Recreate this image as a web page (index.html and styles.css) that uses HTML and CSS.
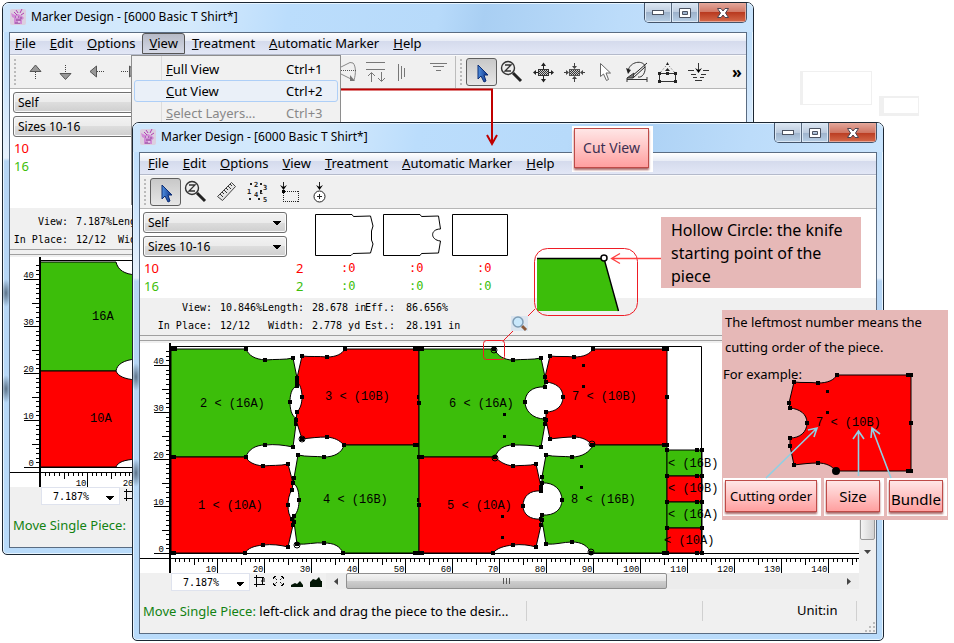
FILE: index.html
```html
<!DOCTYPE html>
<html lang="en">
<head>
<meta charset="utf-8">
<title>Marker Design</title>
<link rel="stylesheet" href="styles.css">
</head>
<body>
<svg class="defs" aria-hidden="true">
  <defs>
    <marker id="dot" markerUnits="userSpaceOnUse" markerWidth="5" markerHeight="5" refX="2" refY="2"><rect width="4" height="4"/></marker>
    <pattern id="hatch" width="2" height="2" patternUnits="userSpaceOnUse"><rect width="2" height="2" fill="#ccc"/><rect width="1" height="1" fill="#333"/><rect x="1" y="1" width="1" height="1" fill="#333"/></pattern>
    <linearGradient id="blue" x1="0" x2="1"><stop offset="0" stop-color="#4f8fe0"/><stop offset="1" stop-color="#0a2f86"/></linearGradient>
    <symbol id="i-cursor" viewBox="0 0 31 28"><path d="M12 7V21L15 18L18 24L20 23L18 17H22Z" fill="url(#blue)" stroke="#0b2c74"/></symbol>
    <symbol id="i-zoom" viewBox="0 0 31 28"><circle cx="11" cy="10" r="6.5" fill="#eee" stroke="#333" stroke-width="1.4"/><path d="M8 7H14L8 13H14" fill="none" stroke="#333" stroke-width="1.3"/><path d="M16 15L24 23" stroke="#222" stroke-width="3"/></symbol>
    <symbol id="i-app" viewBox="0 0 16 16"><rect width="16" height="16" rx="2" fill="#dccfe0"/><path d="M1 4L5 6L8 5L12 7L14 9L12 11V15H4V9L2 8Z" fill="#d18ad6"/><path d="M6 1L8 4M12 0L10 4M14 4L11 6M4 3L7 6" stroke="#b13fb2"/><path d="M5 8H9M6 11H11M5 14H10M10 9H12" stroke="#8c4d96"/><path d="M7 7V9M9 12V14" stroke="#fff"/></symbol>
  </defs>
</svg>

<main class="desktop">

<section class="window window-back">
  <header class="titlebar">
    <svg class="app-icon"><use href="#i-app"/></svg>
    <h1>Marker Design - [6000 Basic T Shirt*]</h1>
    <div class="window-buttons">
      <button aria-label="Minimize"><svg viewBox="0 0 12 6"><rect x=".5" y=".5" width="11" height="4" fill="#fff" stroke="#4c5361"/></svg></button>
      <button aria-label="Maximize"><svg viewBox="0 0 12 10"><path d="M.5 .5H11.5V9.5H.5ZM3.500 3.500V6.500H8.500V3.500Z" fill="#fff" stroke="#4c5361" fill-rule="evenodd"/></svg></button>
      <button class="close" aria-label="Close"><svg viewBox="0 0 12 10"><path d="M.5 .5H4L6 3L8 .5H11.500L8.500 5L11.500 9.500H8L6 7L4 9.500H.5L3.500 5Z" fill="#fff" stroke="#4c4450"/></svg></button>
    </div>
  </header>
  <div class="client">
    <nav class="menubar">
      <button><u>F</u>ile</button><button><u>E</u>dit</button><button><u>O</u>ptions</button><button class="open"><u>V</u>iew</button><button><u>T</u>reatment</button><button><u>A</u>utomatic Marker</button><button><u>H</u>elp</button>
      <div class="dropdown">
        <button><span><u>F</u>ull View</span><span>Ctrl+1</span></button>
        <button class="current"><span><u>C</u>ut View</span><span>Ctrl+2</span></button>
        <button disabled><span><u>S</u>elect Layers...</span><span>Ctrl+3</span></button>
      </div>
    </nav>
    <div class="toolbars">
      <div class="toolbar toolbar-move">
        <span class="grip"></span>
        <button aria-label="Move up"><svg viewBox="0 0 31 28"><path d="M15.500 7L21 13.500H10Z" fill="#999" stroke="#555"/><path d="M15.500 14V22" stroke="#444" stroke-dasharray="1 1"/></svg></button>
        <button aria-label="Move down"><svg viewBox="0 0 31 28"><path d="M14.500 7V15" stroke="#444" stroke-dasharray="1 1"/><path d="M14.500 21.500L20 15.500H9Z" fill="#999" stroke="#555"/></svg></button>
        <button aria-label="Move left"><svg viewBox="0 0 31 28"><path d="M8 13.500L14.500 8V19Z" fill="#999" stroke="#555"/><path d="M15 13.500H23" stroke="#444" stroke-dasharray="1 1"/></svg></button>
        <button aria-label="Move right"><svg viewBox="0 0 31 28"><path d="M8 13.500H16" stroke="#444" stroke-dasharray="1 1"/><path d="M23 13.500L16.500 8V19Z" fill="#999" stroke="#555"/></svg></button>
        <button aria-label="Rotate"></button><button aria-label="Rotate left"></button><button aria-label="Rotate right"></button><button aria-label="Mirror"></button><button aria-label="Tilt"></button><button aria-label="Step"></button>
        <button aria-label="Flip"><svg viewBox="0 0 31 28"><g fill="none" stroke="#888"><path d="M11 9L20 4.500L23 5C26 8 26 16 24 22M11 16L21 21"/><path d="M11 12.500H26" stroke="#555" stroke-dasharray="1 1"/></g><path d="M20 17L25 23H20Z" fill="#777"/></svg></button>
        <button aria-label="Vertical spacing"><svg viewBox="0 0 31 28"><g fill="none" stroke="#777"><path d="M5 4.500H24M5 11.500H24M10.500 24V15M7 18L10.500 14.500L14 18M20.500 14V23M17 20L20.500 23.500L24 20"/></g></svg></button>
        <button aria-label="Align left"><svg viewBox="0 0 31 28"><g fill="none" stroke="#777"><path d="M6.500 6V23M9.500 8V21M12.500 10V19" /></g></svg></button>
        <button aria-label="Align top"><svg viewBox="0 0 31 28"><g fill="none" stroke="#777"><path d="M7 5.500H24M10 8.500H21M13 12.500H18"/></g></svg></button>
      </div>
      <div class="toolbar">
        <span class="grip"></span>
        <button class="pressed" aria-label="Select"><svg><use href="#i-cursor"/></svg></button>
        <button aria-label="Zoom"><svg><use href="#i-zoom"/></svg></button>
        <button aria-label="Spread"><svg viewBox="0 0 31 28"><rect x="10.500" y="11.500" width="10" height="6" fill="url(#hatch)" stroke="#333"/><path d="M15.500 11V6M15.500 18V23M10 14.500H6M21 14.500H25" stroke="#222"/><path d="M13 8L15.500 4.500L18 8ZM13 21L15.500 24.500L18 21ZM8 12L5 14.500L8 17ZM23 12L26 14.500L23 17Z" fill="#222"/></svg></button>
        <button aria-label="Gather"><svg viewBox="0 0 31 28"><rect x="10.500" y="11.500" width="10" height="6" fill="url(#hatch)" stroke="#555"/><path d="M15.500 10V5M15.500 19V24M9 14.500H5M22 14.500H26" stroke="#444"/><path d="M13 8L15.500 11L18 8ZM13 21L15.500 18L18 21ZM7 12L10 14.500L7 17ZM24 12L21 14.500L24 17Z" fill="#444"/></svg></button>
        <button aria-label="Point"><svg viewBox="0 0 31 28"><path d="M10.500 5.500V18.500L13.500 16L16.500 22.500L18.500 21.500L16 15H20.500Z" fill="#fff" stroke="#666"/></svg></button>
        <button aria-label="Edit curve"><svg viewBox="0 0 31 28"><path d="M7 13C9 3 22 2 24 8C25 15 21 20 17 19" fill="none" stroke="#333"/><path d="M5 10L10 12L7 16Z" fill="#222"/><path d="M10 19L26 5M12 20L24 9" stroke="#222"/><path d="M6 20L13 15L12 20ZM6 21.500H26M26 19V24M6 20V24" stroke="#333" fill="#777"/></svg></button>
        <button aria-label="Measure piece"><svg viewBox="0 0 31 28"><rect x="7.500" y="15.500" width="16" height="8" fill="none" stroke="#333"/><path d="M15.500 6L8 15M15.500 6L23 15" stroke="#555" stroke-dasharray="1 2"/><path d="M15.500 4L17 7H14ZM13 13L15.500 10L18 13ZM6 14H9V17H6ZM22 14H25V17H22ZM6 22H9V25H6ZM22 22H25V25H22ZM14 14H17V17H14Z" fill="#222"/></svg></button>
        <button aria-label="Drop"><svg viewBox="0 0 31 28"><path d="M15.500 5V12M5 12.500H11M20 12.500H26M8 16.500H13M18 16.500H23M10 19.500H14M17 19.500H21M12 22.500H19" stroke="#333"/><path d="M12 10L15.500 15L19 10L15.500 12Z"/></svg></button>
        <button class="more" aria-label="More tools">»</button>
      </div>
    </div>
    <div class="panel panel-tall">
      <div class="filters">
        <div class="selects">
          <select aria-label="Material"><option>Self</option></select>
          <select aria-label="Sizes"><option>Sizes 10-16</option></select>
        </div>
        <svg class="thumbs" viewBox="310 212 200 45"><path class="outline" d="M315 214.500H376.500V255.500H315Z"/></svg>
      </div>
      <table class="sizes">
        <tr class="red"><th>10</th></tr>
        <tr class="green"><th>16</th></tr>
      </table>
    </div>
    <dl class="stats stats-back">
      <dt>View:</dt><dd>7.187%</dd><dt>Length:</dt><dd></dd><dt>Eff.:</dt><dd></dd>
      <dt>In Place:</dt><dd>12/12</dd><dt>Width:</dt><dd></dd><dt>Est.:</dt><dd></dd>
    </dl>
    <div class="splitter"></div>
    <div class="plot">
      <svg viewBox="10 257 719 230">
        <path class="piece g" d="M40 262H116C118 270 124 274 136 275L170 273V361L136 359C124 360 117 364 116 371H40Z"/>
        <path class="piece r" d="M40 371H116C118 376 124 379 136 380L170 378V461L136 459C124 460 118 462 116 467H40Z"/>
        <path class="thin" d="M40 260.500H300"/>
        <text class="label" x="92" y="320">16A</text>
        <text class="label" x="90" y="422">10A</text>
        <g class="ruler" data-x="40" data-y="467" data-top="257" data-left="10" data-right="729" data-bottom="487"></g>
      </svg>
      <div class="vscroll"></div>
    </div>
    <footer class="bottom">
      <div class="view-controls">
        <select aria-label="Zoom level"><option>7.187%</option></select>
        <button aria-label="Crop"><svg viewBox="0 0 19 16"><path d="M4 4.500H15M4 11.500H15M6.500 2V14M12.500 4V14" fill="none" stroke="#000"/></svg></button>
      </div>
      <div class="status"><span class="hint">Move Single Piece:</span></div>
    </footer>
  </div>
</section>

<section class="window window-front">
  <header class="titlebar">
    <svg class="app-icon"><use href="#i-app"/></svg>
    <h1>Marker Design - [6000 Basic T Shirt*]</h1>
    <div class="window-buttons">
      <button aria-label="Minimize"><svg viewBox="0 0 12 6"><rect x=".5" y=".5" width="11" height="4" fill="#fff" stroke="#4c5361"/></svg></button>
      <button aria-label="Maximize"><svg viewBox="0 0 12 10"><path d="M.5 .5H11.5V9.5H.5ZM3.500 3.500V6.500H8.500V3.500Z" fill="#fff" stroke="#4c5361" fill-rule="evenodd"/></svg></button>
      <button class="close" aria-label="Close"><svg viewBox="0 0 12 10"><path d="M.5 .5H4L6 3L8 .5H11.500L8.500 5L11.500 9.500H8L6 7L4 9.500H.5L3.500 5Z" fill="#fff" stroke="#4c4450"/></svg></button>
    </div>
  </header>
  <div class="client">
    <nav class="menubar">
      <button><u>F</u>ile</button><button><u>E</u>dit</button><button><u>O</u>ptions</button><button><u>V</u>iew</button><button><u>T</u>reatment</button><button><u>A</u>utomatic Marker</button><button><u>H</u>elp</button>
    </nav>
    <div class="toolbars">
      <div class="toolbar">
        <span class="grip"></span>
        <button class="pressed" aria-label="Select"><svg><use href="#i-cursor"/></svg></button>
        <button aria-label="Zoom"><svg><use href="#i-zoom"/></svg></button>
        <button aria-label="Ruler"><svg viewBox="0 0 31 28"><path d="M5.500 18.500L19.500 4.500L23.500 8.500L10.500 22.500Z" fill="#e4e4e4" stroke="#444"/><path d="M8 16L11 19M10 14L12 16M12 12L15 15M14 10L16 12M16 8L19 11M18 6L20 8" stroke="#333"/></svg></button>
        <button aria-label="Cutting sequence"><svg viewBox="0 0 31 28"><g class="digits"><text x="4" y="16">1</text><text x="11" y="9">2</text><text x="20" y="12">3</text><text x="11" y="19">4</text><text x="20" y="24">5</text></g><path d="M7 5H9V7H7ZM17 5H19V7H17ZM17 12H19V14H17ZM6 20H8V22H6ZM15 20H17V22H15ZM17 13L20 16H17Z" fill="#222"/></svg></button>
        <button aria-label="Start region"><svg viewBox="0 0 31 28"><path d="M9.500 4V10" stroke="#222"/><path d="M6 7L9.500 12L13 7L9.500 9Z"/><path class="dotted" d="M9 13.500H25M9 23.500H25M9.500 13V24M24.500 13V24"/><path d="M8 12H11V15H8Z"/></svg></button>
        <button aria-label="Start point"><svg viewBox="0 0 31 28"><circle cx="14.500" cy="18.500" r="5.500" fill="#fff" stroke="#222"/><path d="M12 18.500H17M14.500 16V21M14.500 4V10" stroke="#222"/><path d="M11 7L14.500 12L18 7L14.500 9Z"/></svg></button>
      </div>
    </div>
    <div class="panel">
      <div class="filters">
        <div class="selects">
          <select aria-label="Material"><option>Self</option></select>
          <select aria-label="Sizes"><option>Sizes 10-16</option></select>
        </div>
        <svg class="thumbs" viewBox="310 212 200 45">
          <path class="outline" d="M315.500 214.500H352L353.500 216.500L370.500 216L373 226L371.500 231V240L373 244L370.500 253L353 253.500L351 255.500H315.500Z"/>
          <path class="outline" d="M383.500 214.500H420L421.500 216.500L438.500 216L440.500 229C430 229 430 240 440.500 241L438.500 253L421.500 253.500L420 255.500H383.500Z"/>
          <path class="outline" d="M452.500 214.500H507.500V255.500H452.500Z"/>
        </svg>
      </div>
      <table class="sizes">
        <tr class="red"><th>10</th><td>2</td><td>:0</td><td>:0</td><td>:0</td></tr>
        <tr class="green"><th>16</th><td>2</td><td>:0</td><td>:0</td><td>:0</td></tr>
      </table>
    </div>
    <dl class="stats">
      <dt>View:</dt><dd>10.846%</dd><dt>Length:</dt><dd>28.678 in</dd><dt>Eff.:</dt><dd>86.656%</dd>
      <dt>In Place:</dt><dd>12/12</dd><dt>Width:</dt><dd>2.778 yd</dd><dt>Est.:</dt><dd>28.191 in</dd>
    </dl>
    <div class="splitter"></div>
    <div class="plot">
      <svg viewBox="140 343 719 230">
        <path class="piece g dots" d="M171 349L175 349L246 349C249 356 255 359 265 360C275 359 285 360 293 358L297 378L297 386C291 388 290 396 290 402C290 408 291 416 297 419L296 424L293 447C283 445 275 444 265 445C255 445 248 450 246 457L174 457L171 457Z"/>
        <path class="piece r dots" d="M171 457L174 457L246 457C248 462 254 465 263 466C271 465 280 466 288 464L293 483L292 490C289 494 288 500 288 505C288 511 289 516 292 519L293 525L288 547C280 545 272 544 263 545C254 546 248 548 245 553L174 553L171 553Z"/>
        <path class="piece r dots" d="M302 356C310 357 318 356 327 357C336 357 342 354 345 349L415 349L419 349L419 397L419 445L415 445L344 445C339 440 335 438 327 437C318 437 310 438 302 439L296 420L297 412C300 409 302 404 302 397C302 390 300 384 297 382L297 378Z"/>
        <path class="piece g dots" d="M298 455C307 457 315 456 324 457C334 457 342 453 344 445L415 445L419 445L419 500L419 553L415 553L343 553C340 546 334 543 324 543C315 542 306 545 297 544L294 522L294 516C298 512 299 506 299 500C299 493 298 486 293 483L294 478Z"/>
        <path class="piece g dots" d="M419 349L422 349L494 349C498 356 504 360 513 360C523 359 532 360 541 358L545 377L545 387C531 386 525 394 525 402C525 410 532 419 545 419L545 424L541 447C532 445 522 445 513 445C504 445 498 449 495 457L422 457L419 457L419 403Z"/>
        <path class="piece r dots" d="M419 457L422 457L495 457C500 462 505 465 513 466C521 465 529 466 536 464L541 487L541 491C530 490 523 496 523 506C523 514 530 520 541 519L541 525L536 547C529 545 521 544 513 545C504 546 497 548 493 553L422 553L419 553L419 505Z"/>
        <path id="piece-seven" class="piece r dots" d="M550 356C558 357 566 356 574 357C584 357 590 354 593 349L664 349L667 349L667 397L667 445L664 445L592 445C588 440 582 437 574 437C566 437 558 438 550 439L546 420L546 412C556 412 563 406 563 397C563 388 556 383 546 382L545 377Z"/>
        <path class="piece g dots" d="M546 455C554 457 564 456 572 457C582 457 590 452 593 445L664 445L667 445L667 553L664 553L591 553C588 546 582 542 572 542C563 542 555 545 546 544L542 520L542 515C555 516 562 509 562 500C562 490 554 482 542 483L542 477Z"/>
        <path class="piece g dots" d="M667 450L697 450L702 450L702 476L667 476Z"/>
        <path class="piece r dots" d="M667 476L697 476L702 476L702 502L667 502Z"/>
        <path class="piece g dots" d="M667 502L697 502L702 502L702 528L667 528Z"/>
        <path class="piece r dots" d="M667 528L702 528L702 553L697 553L667 553Z"/>
        <path class="thin" d="M170 346.500H701.500V553"/>
        <path class="handles" d="M503 413h3v3h-3zM503 435h3v3h-3zM501 515h3v3h-3zM501 536h3v3h-3zM582 364h3v3h-3zM582 385h3v3h-3zM580 465h3v3h-3zM580 486h3v3h-3z"/>
        <g class="starts"><circle cx="302" cy="439" r="3"/><circle cx="494" cy="350" r="3"/><circle cx="297" cy="545" r="3"/><circle cx="495" cy="458" r="3"/><circle cx="592" cy="444" r="3"/><circle cx="591" cy="552" r="3"/></g>
        <text class="label" x="200" y="407">2 &lt; (16A)</text>
        <text class="label" x="325" y="400">3 &lt; (10B)</text>
        <text class="label" x="449" y="407">6 &lt; (16A)</text>
        <text class="label" x="572" y="400">7 &lt; (10B)</text>
        <text class="label" x="198" y="509">1 &lt; (10A)</text>
        <text class="label" x="323" y="503">4 &lt; (16B)</text>
        <text class="label" x="447" y="509">5 &lt; (10A)</text>
        <text class="label" x="571" y="503">8 &lt; (16B)</text>
        <text class="label" x="668" y="467">&lt; (16B)</text>
        <text class="label" x="668" y="492">&lt; (10B)</text>
        <text class="label" x="668" y="518">&lt; (16A)</text>
        <text class="label" x="664" y="544">&lt; (10A)</text>
        <g class="ruler" data-x="170" data-y="553" data-top="343" data-left="140" data-right="859" data-bottom="573"></g>
      </svg>
      <div class="vscroll"><div class="vthumb"></div><button aria-label="Scroll down"><svg viewBox="0 0 7 4"><path d="M0 0H7L3.500 4Z" fill="#444"/></svg></button></div>
    </div>
    <footer class="bottom">
      <div class="view-controls">
        <select aria-label="Zoom level"><option>7.187%</option></select>
        <button aria-label="Crop"><svg viewBox="0 0 19 16"><path d="M4 4.500H14M4 11.500H15M6.500 2V14M12.500 4V12M12 6H15M11 8H15" fill="none" stroke="#000"/></svg></button>
        <button aria-label="Fit"><svg viewBox="0 0 19 16"><path d="M4.500 6V3.500H7M12 3.500H14.500V6M14.500 10V12.500H12M7 12.500H4.500V10M5 4L8 7M14 4L11 7M5 12L8 9M14 12L11 9" fill="none" stroke="#000" stroke-dasharray="2 1"/></svg></button>
        <button aria-label="Zoom out"><svg viewBox="0 0 19 16"><path d="M3 14V12L7 10L9 11L12 8L15 12V14Z" fill="#021505"/></svg></button>
        <button aria-label="Zoom in"><svg viewBox="0 0 19 16"><path d="M3 14V9L6 6L9 7L12 4L14 8H15V14Z" fill="#021505"/></svg></button>
        <div class="hscroll">
          <button aria-label="Scroll left"><svg viewBox="0 0 4 7"><path d="M4 0V7L0 3.500Z" fill="#444"/></svg></button>
          <div class="hthumb"><i></i><i></i><i></i></div>
          <span class="track"></span>
          <button aria-label="Scroll right"><svg viewBox="0 0 4 7"><path d="M0 0V7L4 3.500Z" fill="#444"/></svg></button>
        </div>
      </div>
      <div class="status">
        <p><span class="hint">Move Single Piece:</span> left-click and drag the piece to the desir...</p>
        <span class="cell"></span>
        <span class="cell unit">Unit:in</span>
        <svg class="resize" viewBox="0 0 10 10"><path d="M8 0h2v2h-2zM4 4h2v2h-2zM8 4h2v2h-2zM0 8h2v2h-2zM4 8h2v2h-2zM8 8h2v2h-2z" fill="#bcbcbc"/></svg>
      </div>
    </footer>
  </div>
</section>

<div class="ghost ghost-large"></div>
<div class="ghost ghost-small"></div>

<p class="note note-knife">Hollow Circle: the knife starting point of the piece</p>
<aside class="note note-order">
  <p>The leftmost number means the cutting order of the piece.</p>
  <p class="example">For example:</p>
  <div class="tags"><span class="tag">Cutting order</span><span class="tag tag-large">Size</span><span class="tag tag-large tag-low">Bundle</span></div>
</aside>
<span class="tag tag-view">Cut View</span>

<svg class="callouts" viewBox="0 0 954 643">
  <path d="M341 89.500H492V142M487 135L492 144L497 135" fill="none" stroke="#c00000" stroke-width="2"/>
  <path d="M537 258.500H604L618.500 311H537Z" fill="#3cbe0a"/>
  <path d="M537 258.500H604L618.500 311" fill="none" stroke="#000" stroke-width="1.400"/>
  <circle cx="604" cy="258" r="3" fill="#fff" stroke="#000" stroke-width="1.500"/>
  <g fill="none" stroke="#ee1c25">
    <rect x="534.500" y="248.500" width="103" height="67" rx="13"/>
    <path d="M535 309L503 341"/>
    <rect x="483.500" y="340.500" width="21" height="19" rx="3"/>
    <path d="M661 258.500H612M620 253.500L611.500 258.500L620 263.500" stroke="#ff4040" stroke-width="1.300"/>
  </g>
  <rect x="511" y="316" width="17" height="15" fill="#dbe5ef"/>
  <path d="M522 326L526 330" stroke="#8a5a3a" stroke-width="3"/>
  <circle cx="518" cy="322" r="5" fill="#c9e8fb" stroke="#7f9db5" stroke-width="1.500"/>
  <g transform="translate(244 26)">
    <use href="#piece-seven"/>
    <path class="handles" d="M582 364h3v3h-3zM582 385h3v3h-3z"/>
    <circle cx="592" cy="445" r="3" fill="none" stroke="#000" stroke-width="2"/>
    <text class="label" x="572" y="400">7 &lt; (10B)</text>
  </g>
  <path d="M766 478L817 428M808 430L817 428L814 437M858.500 476V431M853 439L858.500 431L864 439M891 478L872 428M871 438L872 428L880 434" fill="none" stroke="#8fd0e4" stroke-width="1.600"/>
</svg>
</main>
<script src="rulers.js"></script>
</body>
</html>
```
FILE: styles.css
```css
* { box-sizing: border-box; }
body { margin: 0; background: #fff; color: #000; font: 13px/18px "Noto Sans", "Open Sans", sans-serif; }
h1, p, dl, dd { margin: 0; }
button { font: inherit; color: inherit; background: none; border: 0; padding: 0; }
.defs { position: absolute; width: 0; height: 0; }
.desktop { position: relative; min-height: 100vh; overflow: hidden; }

/* windows */
.window {
  position: absolute;
  width: 752px;
  padding: 0 6px 6px;
  border: 1px solid #1c2733;
  border-radius: 7px 7px 5px 5px;
  box-shadow: inset 0 0 0 1px #e6f4ff;
  background: linear-gradient(to bottom, #b9dcfc 0, #cfe6fc 90px, #e6f1fd 155px, #b6d5f4 158px, #b9dbfa 100%);
}
.window-back { left: 2px; top: 2px; }
.window-front { left: 132px; top: 122px; }
.window::before {
  content: "";
  position: absolute;
  left: 0; top: 230px;
  width: 6px; height: 180px;
  background: radial-gradient(ellipse 5px 14px at 3px 24px, #5c7288 0, transparent 100%), radial-gradient(ellipse 5px 14px at 3px 120px, #5c7288 0, transparent 100%);
}
.window-back::before { top: 266px; }
.titlebar {
  display: flex;
  align-items: flex-start;
  height: 29px;
  margin: 0 -6px;
  padding: 0 6px 0 7px;
  border-radius: 6px 6px 0 0;
  box-shadow: inset 0 1px 0 #e6f4ff;
  background: linear-gradient(100deg, #cde6fc 0, #d5eafc 25%, #bbddfc 38%, #b7dafa 58%, #a9cff3 64%, #bcdcfa 82%, #c9e4fd 100%);
}
.app-icon { width: 16px; height: 16px; margin-top: 6px; }
.titlebar h1 { flex: 1; margin: 4px 0 0 5px; font-size: 12px; font-weight: 400; line-height: 20px; }
.window-buttons { display: flex; height: 20px; border: 1px solid #44546a; border-top: 0; border-radius: 0 0 5px 5px; overflow: hidden; }
.window-buttons button {
  display: flex; align-items: center; justify-content: center;
  width: 27px;
  border-right: 1px solid #56677c;
  background: linear-gradient(#dce7f3, #bccbde 50%, #9db2cb 50%, #b7cfe6);
  box-shadow: inset 0 0 0 1px #dbe8f5;
}
.window-buttons .close { width: 47px; border-right: 0; background: linear-gradient(#e3a79c, #d07663 50%, #b93a20 50%, #d4694a); box-shadow: inset 0 0 0 1px #e6a899; }
.window-buttons svg { width: 12px; max-height: 10px; }
.client { border: 1px solid #5a6c82; background: #f0f0f0; }

/* menus */
.menubar {
  position: relative;
  display: flex;
  height: 22px;
  padding-left: 5px;
  gap: 14px;
  border-bottom: 1px solid #b4bacb;
  background: linear-gradient(#fff, #e9edf6 36%, #d4daec 36%, #e2e7f6);
}
.window-front .menubar { padding-left: 8px; }
.menubar > button { line-height: 21px; }
.menubar .open { margin: 0 -7px; padding: 0 6px; border: 1px solid #555; border-radius: 3px 3px 0 0; line-height: 19px; background: linear-gradient(#b6bac6, #d5d9e6); }
.dropdown {
  position: absolute;
  left: 121px; top: 22px;
  width: 210px; height: 150px;
  padding: 2px;
  border: 1px solid #8e8e8e;
  background: linear-gradient(90deg, transparent 29px, #dcdcdc 29px, #dcdcdc 30px, transparent 30px) #f1f1f1;
}
.dropdown button {
  display: grid;
  grid-template-columns: 120px 1fr;
  width: 100%; height: 22px;
  padding-left: 31px;
  border: 1px solid transparent;
  border-radius: 3px;
  text-align: left;
  line-height: 20px;
}
.dropdown .current { border-color: #aecff7; background: #eaf0f8; }
.dropdown button:disabled { color: #888; }

/* toolbars */
.toolbars { display: flex; height: 34px; border-bottom: 1px solid #b6b6b6; border-top: 1px solid #fafafa; }
.toolbar { display: flex; flex: 1; align-items: center; padding-left: 4px; }
.toolbar-move { flex: 0 0 446px; border-right: 1px solid #bcbcbc; }
.toolbar button { flex: none; width: 31px; height: 28px; }
.toolbar svg { display: block; width: 31px; height: 28px; }
.toolbar .pressed { border: 1px solid #5e5e5e; border-radius: 3px; background: linear-gradient(#c8c8c8, #e6e6e6); }
.toolbar .pressed svg { margin: -1px; }
.toolbar .more { width: 10px; margin: 0 4px 0 auto; font-size: 16px; font-weight: 700; line-height: 24px; }
.grip { width: 2px; height: 26px; margin-right: 4px; background: repeating-linear-gradient(#bbb 0, #bbb 2px, transparent 2px, transparent 4px); }
.digits { font: 700 7px "DejaVu Sans Mono", monospace; fill: #222; }
.dotted { fill: none; stroke: #222; stroke-dasharray: 1 1; shape-rendering: crispEdges; }

/* size panel */
.panel { min-height: 89px; padding: 3px 3px 0; background: #fff; }
.panel-tall { min-height: 119px; }
.filters { display: flex; height: 46px; }
.selects { display: flex; flex-direction: column; gap: 3px; flex: 0 0 144px; }
select { font: inherit; color: #000; appearance: none; background-repeat: no-repeat; background-position: right 5px top 8px, 0 0; }
.selects select {
  height: 21px;
  padding: 0 4px;
  border: 1px solid #707070;
  border-radius: 3px;
  font-size: 12px;
  box-shadow: inset 0 0 0 1px #fafafa;
  background-image: conic-gradient(from 315deg at 50% 100%, #000 90deg, transparent 0), linear-gradient(#f2f2f2, #ebebeb 50%, #dddddd 50%, #cfcfcf);
  background-size: 8px 4px, 100% 100%;
}
.thumbs { width: 200px; height: 45px; margin-left: 23px; }
.outline { fill: none; stroke: #000; }
.sizes { border-collapse: collapse; table-layout: fixed; width: 402px; margin-top: 1px; }
.sizes th, .sizes td { padding: 0 0 0 1px; width: 68px; height: 18px; line-height: 18px; text-align: left; font-weight: 400; }
.sizes th { width: 152px; }
.sizes th + td { width: 46px; }
.sizes td + td { padding: 0; font: 12px/18px "DejaVu Sans Mono", monospace; }
.red { color: #f00; }
.green { color: #3cbe0a; }

/* statistics */
.stats {
  display: grid;
  grid-template-columns: 72px 50px 42px 61px 30px 1fr;
  padding-top: 1px;
  font: 10px/18px "DejaVu Sans Mono", monospace;
  white-space: nowrap;
}
.stats dt { text-align: right; }
.stats dd { padding-left: 8px; }
.stats dd:nth-of-type(3n) { padding-left: 11px; }
.stats-back { grid-template-columns: 58px 44px 42px 61px 30px 1fr; padding-top: 5px; }
.splitter { height: 6px; margin-bottom: 2px; border: solid #a0a0a0; border-width: 1px 0; }

/* plot */
.plot { display: flex; background: #fff; }
.plot > svg { display: block; flex: 1; min-width: 0; overflow: visible; }
.piece { stroke: #000; stroke-width: 1px; }
.piece.g { fill: #3cbe0a; }
.piece.r { fill: #f00; }
.dots { marker: url(#dot); }
.thin { fill: none; stroke: #000; }
.starts circle { fill: none; stroke: #000; stroke-width: 1px; }
.label { font: 12px "Liberation Mono", monospace; }
.ruler path { fill: none; stroke: #000; shape-rendering: crispEdges; }
.ruler .axis { stroke-width: 2px; }
.ruler text { font: 9px "Liberation Mono", monospace; text-anchor: end; }
.vscroll { display: flex; flex-direction: column; flex: 0 0 17px; background: #f0f0f0; padding: 0 1px 15px; }
.vthumb { flex: 1; border: 1px solid #999; border-radius: 2px; background: linear-gradient(90deg, #f4f4f4, #d2d2d2); }
.vscroll button { height: 18px; }
.vscroll svg { width: 7px; height: 4px; }

/* bottom bars */
.bottom { height: 60px; }
.view-controls { display: flex; padding: 0 17px 0 31px; height: 18px; }
.view-controls select {
  width: 79px; height: 18px;
  padding: 0 0 0 11px;
  border: 1px solid #dfe3ee;
  font: 10px "DejaVu Sans Mono", monospace;
  background-color: #fff;
  background-image: conic-gradient(from 315deg at 50% 100%, #000 90deg, transparent 0);
  background-size: 8px 4px;
}
.view-controls > button { width: 19px; height: 16px; }
.view-controls > button svg { display: block; width: 19px; height: 16px; }
.hscroll { display: flex; flex: 1; height: 16px; background: #ececec; }
.hscroll button { width: 20px; line-height: 0; }
.hscroll svg { width: 4px; height: 7px; }
.hthumb { display: flex; align-items: center; justify-content: center; gap: 2px; flex: 0 1 321px; border: 1px solid #8f8f8f; border-radius: 2px; background: linear-gradient(#f3f3f3, #e4e4e4 50%, #cfcfcf 50%, #bcbcbc); }
.hthumb i { width: 1px; height: 6px; background: #555; }
.track { flex: 1; }
.status { display: flex; align-items: flex-end; height: 42px; padding: 0 1px 1px 3px; }
.status p, .status > .hint { flex: 0 0 383px; align-self: flex-start; padding-top: 11px; }
.hint { color: #128212; }
.status .cell { flex: 0 0 176px; height: 20px; margin-bottom: 11px; border-left: 1px solid #d0d0d0; }
.status .unit { flex: 1; padding-left: 94px; border-right: 1px solid #d0d0d0; }
.resize { width: 10px; height: 10px; margin-left: 8px; }

/* notes */
.ghost { position: absolute; border: 1px solid #f0f0f0; }
.ghost-large { left: 800px; top: 71px; width: 72px; height: 34px; border-left-width: 3px; }
.ghost-small { left: 879px; top: 96px; width: 40px; height: 20px; border-width: 2px 1px 3px 5px; }
.note { position: absolute; background: #e6b8b7; }
.note-knife { left: 661px; top: 217px; width: 200px; height: 71px; padding: 2px 8px 0 10px; font-size: 16px; line-height: 23px; }
.note-order { left: 722px; top: 310px; width: 226px; min-height: 210px; padding-left: 3px; line-height: 25px; }
.note-order .example { margin-left: -2px; padding-top: 2px; }
.tag {
  border: 1px solid #be4b48;
  box-shadow: 0 2px 2px #a66, 1px 1px 0 3px #fff;
  background: linear-gradient(#ffe6e6, #ffc4c4 50%, #ff9f9f);
  text-align: center;
}
.tags { display: flex; gap: 9px; padding-top: 93px; }
.tags .tag { width: 92px; height: 32px; line-height: 30px; }
.tags .tag-large { width: 54px; font-size: 15px; }
.tags .tag-low { line-height: 36px; }
.tag-view { position: absolute; left: 574px; top: 128px; width: 75px; height: 40px; font-size: 14px; line-height: 37px; color: #3b2f52; }
.callouts { position: absolute; left: 0; top: 0; width: 954px; height: 643px; pointer-events: none; }
```
FILE: rulers.js
```js
// Draws the axes, ticks and numbers of every marker plot.
const NS = "http://www.w3.org/2000/svg";
const STEP = 4.7;

function add(parent, name, attrs, text) {
  const el = document.createElementNS(NS, name);
  for (const key in attrs) el.setAttribute(key, attrs[key]);
  if (text !== undefined) el.textContent = text;
  parent.appendChild(el);
}

document.querySelectorAll(".ruler").forEach((ruler) => {
  const d = ruler.dataset;
  const x0 = +d.x, y0 = +d.y, right = +d.right;
  const top = +d.top, bottom = +d.bottom, left = +d.left;
  let ticks = `M${x0 - 15} ${y0 + 0.5}H${right}M${left} ${y0 + 5.5}H${right}`;
  for (let i = 0; y0 - i * STEP > top + 4; i++) {
    const y = Math.round(y0 - i * STEP) + 0.5;
    const len = i % 10 === 0 ? 16 : i % 5 === 0 ? 8 : 4;
    ticks += `M${x0 - len} ${y}H${x0}`;
    if (i % 10 === 0) add(ruler, "text", { x: x0 - 6, y: y - 2 }, i);
  }
  for (let i = 1; x0 + i * STEP < right; i++) {
    const x = Math.round(x0 + i * STEP) + 0.5;
    const len = i % 10 === 0 ? 15 : i % 5 === 0 ? 7 : 4;
    ticks += `M${x} ${y0 + 5}v${len}`;
    if (i % 10 === 0) add(ruler, "text", { x: x - 1, y: bottom - 1 }, i);
  }
  add(ruler, "path", { d: ticks });
  add(ruler, "path", { class: "axis", d: `M${x0} ${top}V${bottom}` });
});
```
